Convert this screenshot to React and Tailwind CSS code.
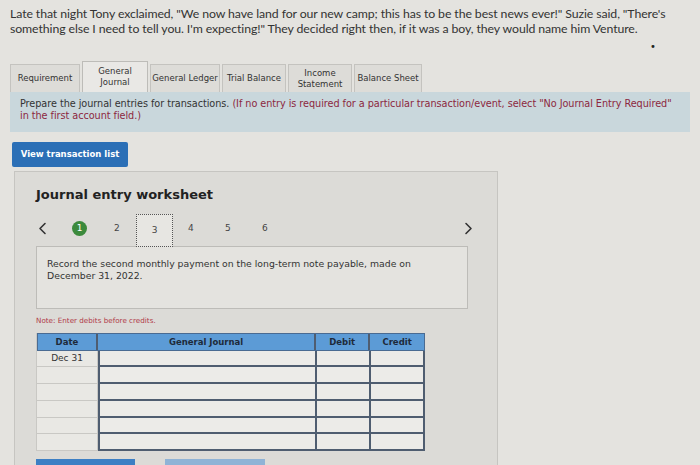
import React from 'react'

const tabs = [
  { label: 'Requirement', w: 'w-[70px]' },
  { label: 'General Journal', w: 'w-[66px]', active: true, two: ['General', 'Journal'] },
  { label: 'General Ledger', w: 'w-[70px]' },
  { label: 'Trial Balance', w: 'w-[64px]' },
  { label: 'Income Statement', w: 'w-[64px]', two: ['Income', 'Statement'] },
  { label: 'Balance Sheet', w: 'w-[68px]' },
]

const Chevron = ({ dir }) => (
  <svg width="9" height="13" viewBox="0 0 9 13" fill="none" stroke="#333" strokeWidth="1.6" strokeLinecap="round" strokeLinejoin="round">
    {dir === 'left' ? <path d="M7 1.5 L2 6.5 L7 11.5" /> : <path d="M2 1.5 L7 6.5 L2 11.5" />}
  </svg>
)

const Row = ({ date }) => (
  <div className="flex h-[16.7px]">
    <div className="w-[61px] border-r border-b border-[#c9c8c4] bg-[#e9e8e4] text-center text-[9px] leading-[15px] text-[#333]">{date}</div>
    <div className="w-[219px] border-2 border-t-0 border-[#4f5d70] bg-[#ecebe8]"></div>
    <div className="w-[54px] border-2 border-t-0 border-l-0 border-[#4f5d70] bg-[#ecebe8]"></div>
    <div className="w-[54px] border-2 border-t-0 border-l-0 border-[#4f5d70] bg-[#ecebe8]"></div>
  </div>
)

const App = () => {
  return (
    <div className="w-[700px] h-[465px] overflow-hidden bg-[#e4e3df] font-['DejaVu_Sans',sans-serif]">
      <div className="px-[10px] pt-[6px] text-[12.3px] leading-[15px] text-[#333] font-['Lato',sans-serif] tracking-[-0.1px]">
        Late that night Tony exclaimed, "We now have land for our new camp; this has to be the best news ever!" Suzie said, "There's something else I need to tell you. I'm expecting!" They decided right then, if it was a boy, they would name him Venture.
      </div>
      <div className="relative">
        <span className="absolute left-[650px] top-[3px] text-[#222] text-[10px]">•</span>
      </div>

      <div className="flex items-end gap-[2px] pl-[10px] mt-[25px]">
        {tabs.map((t) => (
          <div
            key={t.label}
            className={`${t.w} flex items-center justify-center text-center text-[8.5px] leading-[11px] text-[#333] border border-b-0 ${t.active ? 'h-[31px] bg-[#e9e8e5] border-[#bdbcb8]' : 'h-[28px] bg-[#dddcd8] border-[#c4c3bf]'}`}
          >
            {t.two ? (
              <span>{t.two[0]}<br />{t.two[1]}</span>
            ) : t.label}
          </div>
        ))}
      </div>

      <div className="mx-[10px] w-[680px] h-[40px] bg-[#c9d7dc] px-[10px] pt-[6px] text-[9.7px] leading-[12px] text-[#333] tracking-[-0.05px]">
        <div className="whitespace-nowrap">
          Prepare the journal entries for transactions. <span className="text-[#8c2740]">(If no entry is required for a particular transaction/event, select "No Journal Entry Required"</span>
        </div>
        <div className="text-[#8c2740]">in the first account field.)</div>
      </div>

      <div className="pl-[12px] mt-[10px]">
        <div className="w-[116px] h-[25px] rounded-[2px] bg-[#2b6fb6] text-white text-[8.5px] font-bold flex items-center justify-center">View transaction list</div>
      </div>

      <div className="ml-[14px] mt-[4px] w-[484px] h-[300px] bg-[#dcdbd7] border border-[#c6c5c1] pl-[21px] pt-[14px]">
        <div className="text-[13px] font-bold text-[#222] leading-[18px]">Journal entry worksheet</div>

        <div className="relative h-[32px] mt-[10px] w-[440px] text-[9px] text-[#444]">
          <span className="absolute left-[2px] top-[8px]"><Chevron dir="left" /></span>
          <span className="absolute left-[36px] top-[7px] w-[15px] h-[15px] rounded-full bg-[#3c8a3c] text-white text-[9px] leading-[15px] text-center">1</span>
          <span className="absolute left-[78px] top-[8px]">2</span>
          <span className="absolute left-[100px] top-[0px] w-[37px] h-[33px] border border-dotted border-[#555] bg-[#e7e6e2] text-center leading-[31px]">3</span>
          <span className="absolute left-[152px] top-[8px]">4</span>
          <span className="absolute left-[189px] top-[8px]">5</span>
          <span className="absolute left-[226px] top-[8px]">6</span>
          <span className="absolute left-[428px] top-[8px]"><Chevron dir="right" /></span>
        </div>

        <div className="w-[432px] h-[63px] bg-[#e4e3df] border border-[#bdbcb8] pl-[10px] pr-[30px] pt-[11px] text-[9.3px] leading-[12px] text-[#333]">
          Record the second monthly payment on the long-term note payable, made on December 31, 2022.
        </div>

        <div className="mt-[7px] text-[7.2px] text-[#b03a48]">Note: Enter debits before credits.</div>

        <div className="mt-[6px] w-[389px] border-l border-[#c9c8c4]">
          <div className="flex h-[18px] bg-[#5c9bd6] border border-[#4a6b92] text-[8.5px] font-bold text-[#1e2a3a] leading-[16px]">
            <div className="w-[60px] text-center border-r-2 border-[#4f5d70]">Date</div>
            <div className="w-[219px] text-center border-r-2 border-[#4f5d70]">General Journal</div>
            <div className="w-[54px] text-center border-r-2 border-[#4f5d70]">Debit</div>
            <div className="w-[54px] text-center">Credit</div>
          </div>
          <Row date="Dec 31" />
          <Row />
          <Row />
          <Row />
          <Row />
          <Row />
        </div>

        <div className="flex gap-[30px] mt-[8px]">
          <div className="w-[99px] h-[6px] bg-[#3c7fc4]"></div>
          <div className="w-[100px] h-[6px] bg-[#8fb3d6]"></div>
        </div>
      </div>
    </div>
  )
}

export default App
